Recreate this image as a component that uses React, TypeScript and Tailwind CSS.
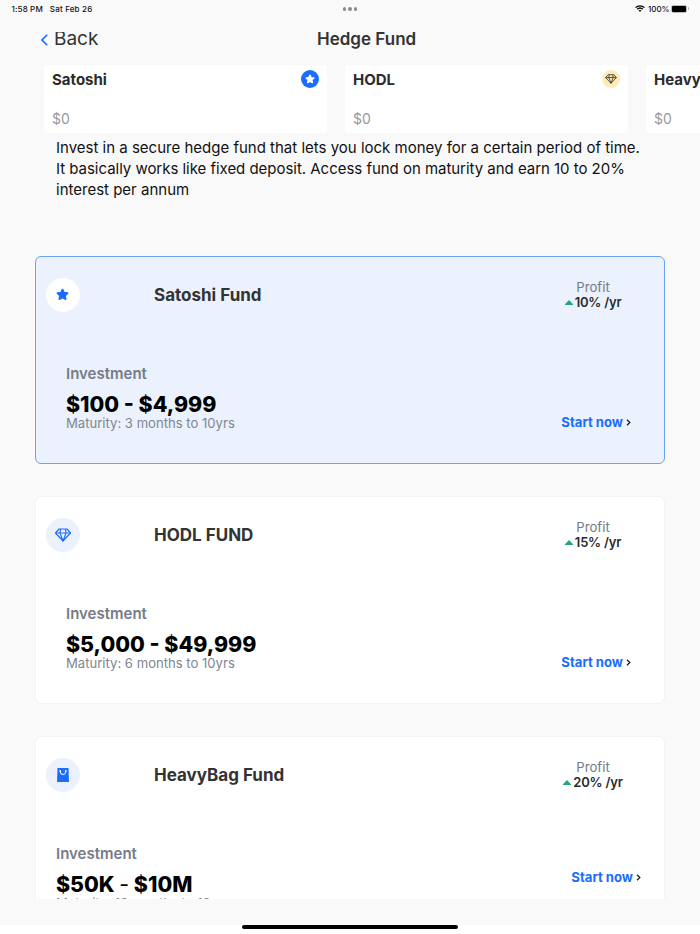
import React from "react";

function Star({ className }: { className: string }) {
  return (
    <svg viewBox="0 0 24 24" className={className} fill="currentColor" stroke="currentColor" strokeWidth="3" strokeLinejoin="round">
      <path d="M12 2.6l2.9 6 6.5.9-4.7 4.6 1.2 6.6-5.9-3.1-5.9 3.1 1.2-6.6L2.6 9.5l6.5-.9z" />
    </svg>
  );
}

function Diamond({ className }: { className: string }) {
  return (
    <svg viewBox="0 0 32 28" className={className} fill="none" stroke="currentColor" strokeWidth="2.3" strokeLinejoin="round">
      <path d="M8 2h16l7 8-15 16L1 10z" />
      <path d="M1 10h30M11 2l-1 8 6 16 6-16-1-8" />
    </svg>
  );
}

function Bag({ className }: { className: string }) {
  return (
    <svg viewBox="0 0 12 14" className={className}>
      <path d="M.5 0h11L12 14H0z" fill="#1a6dff" />
      <path d="M3.2 3.2v.5a2.8 2.8 0 0 0 5.6 0v-.5" fill="none" stroke="#fff" strokeWidth="1" />
      <circle cx="3.2" cy="2.9" r=".9" fill="#fff" />
      <circle cx="8.8" cy="2.9" r=".9" fill="#fff" />
    </svg>
  );
}

function StatusBar() {
  return (
    <div className="grid h-[18px] shrink-0 grid-cols-3 items-center pl-[11.5px] pr-[11px] text-[8px] font-medium leading-[16px] text-[#111]">
      <div className="-mt-px flex gap-[7px]">
        <span className="tracking-[0.15px]">1:58 PM</span>
        <span className="tracking-[0.18px]">Sat Feb 26</span>
      </div>
      <div className="flex justify-center gap-[2px]">
        <i className="size-[3.5px] rounded-full bg-[#8b8b8b]" />
        <i className="size-[3.5px] rounded-full bg-[#8b8b8b]" />
        <i className="size-[3.5px] rounded-full bg-[#8b8b8b]" />
      </div>
      <div className="-mt-px flex items-center justify-end">
        <svg viewBox="0 0 20 14" className="mr-[3px] h-[7px] w-[10px]" fill="none" stroke="#000" strokeWidth="2.6">
          <path d="M1 5.2c5-4.8 13-4.8 18 0M4.4 8.6c3.2-3 8-3 11.2 0" />
          <path d="M7 10.8c2-1.4 4-1.4 6 0l-3 3z" fill="#000" stroke="none" />
        </svg>
        <span>100%</span>
        <span className="ml-[2px] flex h-[8px] w-[16px] rounded-[2px] border border-[#bbb] p-0">
          <i className="flex-1 rounded-[1px] bg-black" />
        </span>
        <i className="ml-[0.5px] h-[3px] w-px rounded-r bg-[#aaa]" />
      </div>
    </div>
  );
}

function Wallet({ name, children }: { name: string; children?: React.ReactNode }) {
  return (
    <div className="flex h-[68px] w-[283px] shrink-0 flex-col justify-between rounded-[3px] bg-white pb-[5px] pl-2 pr-2 pt-[5px]">
      <div className="flex items-start justify-between">
        <span className="text-[15px] font-bold leading-5 text-[#2b2b2b]">{name}</span>
        {children}
      </div>
      <span className="text-[14px] leading-[19px] text-[#999]">$0</span>
    </div>
  );
}

type FundProps = {
  title: string;
  icon: React.ReactNode;
  rate: string;
  amount: React.ReactNode;
  maturity: string;
  selected?: boolean;
  wide?: boolean;
};

function Fund({ title, icon, rate, amount, maturity, selected, wide }: FundProps) {
  return (
    <section
      className={`h-[208px] shrink-0 rounded-[6px] border ${selected ? "border-[#69a3f8] bg-[#ebf2fd]" : "border-[#f3f3f3] bg-white"}`}
    >
      <div className="flex h-[96px] items-start pl-[10px] pt-[21px]">
        <div className={`flex size-[34px] items-center justify-center rounded-full pb-px text-[#1a6dff] ${selected ? "bg-white pr-px" : "bg-[#ebf2fd]"}`}>
          {icon}
        </div>
        <h2 className="ml-[74px] mt-[5px] flex-1 text-[17px] font-bold leading-6 text-[#333]">{title}</h2>
        <div className="mr-[11px] mt-[2px] w-[120px] text-center text-[13.2px] leading-[15px]">
          <div className="text-[#757c88]">Profit</div>
          <div className="flex items-center justify-center gap-[2px] text-[13px] font-semibold tracking-[-0.2px] text-[#2b2b2b]">
            <svg viewBox="0 0 8 5" className="-mt-px h-[5px] w-[8px]">
              <path d="M4 0L8 4.2V5H0v-.8z" fill="#27a57b" />
            </svg>
            <span>{rate}</span>
          </div>
        </div>
      </div>
      <div className={`flex justify-between ${wide ? "pl-5 pr-[23px]" : "pl-[30px] pr-[33px]"}`}>
        <div>
          <div className="mt-[11px] text-[15px] font-semibold leading-5 text-[#757c88]">Investment</div>
          <div className="mt-[8px] text-[21.4px] font-extrabold leading-6 text-black">{amount}</div>
          <div className="-mt-[2px] text-[13.1px] leading-[18px] text-[#7f8691]">{maturity}</div>
        </div>
        <div className={`flex h-5 items-center gap-[3px] text-[13.1px] font-bold text-[#1a6dff] ${wide ? "mt-[35px]" : "mt-[60px]"}`}>
          <span>Start now</span>
          <svg viewBox="0 0 5 8" className="-mt-px h-[7px] w-[5px]" fill="none" stroke="#222" strokeWidth="1.5">
            <path d="M.8.8L4 4 .8 7.2" />
          </svg>
        </div>
      </div>
    </section>
  );
}

export default function App() {
  return (
    <div className="flex h-[934px] w-[700px] flex-col overflow-hidden bg-white font-['Inter',sans-serif]">
      <div className="flex h-[925px] shrink-0 flex-col bg-[#f9f9f9]">
        <StatusBar />
        <header className="flex h-[47px] shrink-0 items-start pl-[41px]">
          <svg viewBox="0 0 7 12" className="mt-[16px] h-[12px] w-[7px]" fill="none" stroke="#1a6dff" strokeWidth="1.6">
            <path d="M6.2.8L1 6l5.2 5.2" />
          </svg>
          <div className="mt-[14px] h-[20px] w-[263px] overflow-hidden pl-[6px]">
            <div className="-mt-[7px] text-[19px] leading-[27px] text-[#333]">Back</div>
          </div>
          <h1 className="ml-[6px] mt-[9px] text-[17px] font-semibold leading-6 text-[#333]">Hedge Fund</h1>
        </header>
        <div className="flex h-[68px] shrink-0 gap-[18px] overflow-hidden pl-[44px]">
          <Wallet name="Satoshi">
            <span className="flex size-[18px] items-center justify-center rounded-full bg-[#1a6dff] text-white">
              <Star className="size-[10px]" />
            </span>
          </Wallet>
          <Wallet name="HODL">
            <span className="flex size-[18px] items-center justify-center rounded-full bg-[#ffebb5] text-[#333]">
              <Diamond className="h-[10px] w-[12px]" />
            </span>
          </Wallet>
          <Wallet name="HeavyBag" />
        </div>
        <p className="h-[123px] shrink-0 whitespace-nowrap pl-[56px] pt-[4px] text-[15px] leading-[21px] text-[#111]">
          Invest in a secure hedge fund that lets you lock money for a certain period of time.
          <br />
          <span className="tracking-[-0.03px]">It basically works like fixed deposit. Access fund on maturity and earn 10 to 20%</span>
          <br />
          interest per annum
        </p>
        <main className="flex h-[643px] shrink-0 flex-col gap-[32px] overflow-hidden px-[35px]">
          <Fund selected title="Satoshi Fund" icon={<Star className="size-[13px]" />} rate="10% /yr" amount="$100 - $4,999" maturity="Maturity: 3 months to 10yrs" />
          <Fund title="HODL FUND" icon={<Diamond className="h-[14px] w-[16px]" />} rate="15% /yr" amount="$5,000 - $49,999" maturity="Maturity: 6 months to 10yrs" />
          <Fund
            wide
            title="HeavyBag Fund"
            icon={<Bag className="h-[14px] w-[12px]" />}
            rate="20% /yr"
            amount={<>$50K <span className="font-normal">-</span> $10M</>}
            maturity="Maturity: 12 months to 10yrs"
          />
        </main>
      </div>
      <div className="mx-auto h-[4px] w-[216px] shrink-0 rounded-full bg-black" />
    </div>
  );
}
